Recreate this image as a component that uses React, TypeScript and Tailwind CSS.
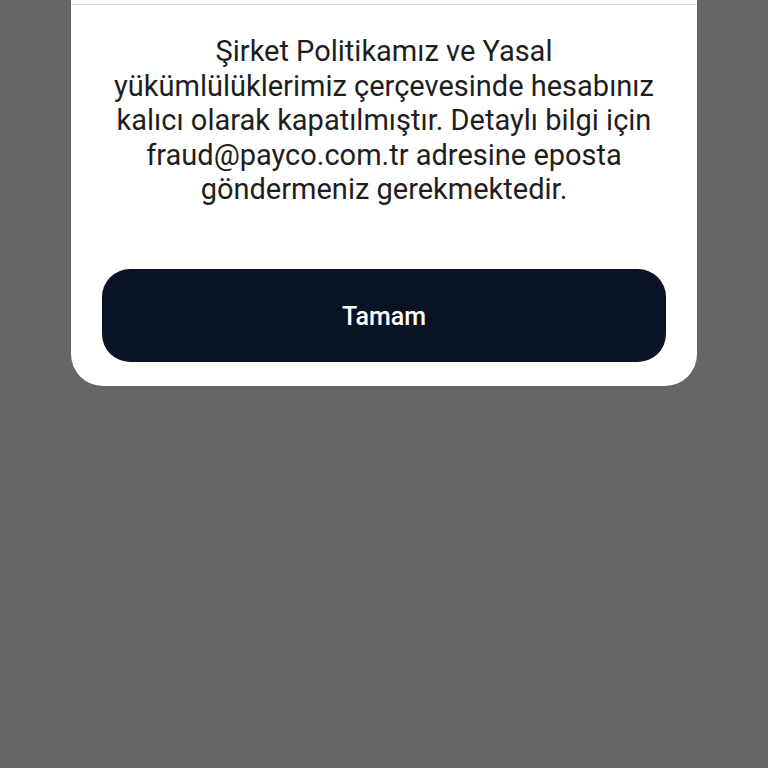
export default function App() {
  return (
    <div className="min-h-screen w-full bg-[#666666] font-['Roboto',sans-serif]">
      <div className="mx-[71px] w-[626px] rounded-b-[32px] bg-white">
        <div className="h-[4px]" />
        <div className="h-px bg-[#d9d9d9]" />
        <div className="px-[31px] pb-[24px]">
          <p className="pt-[29px] text-center text-[29px] leading-[34.5px] text-[#1e1e1e]">
            Şirket Politikamız ve Yasal
            <br />
            yükümlülüklerimiz çerçevesinde hesabınız
            <br />
            kalıcı olarak kapatılmıştır. Detaylı bilgi için
            <br />
            fraud@payco.com.tr adresine eposta
            <br />
            göndermeniz gerekmektedir.
          </p>
          <button className="mt-[62px] flex h-[93px] w-full items-center justify-center rounded-[28px] bg-[#0a1324] pt-[3px] text-[25px] font-medium text-white">
            Tamam
          </button>
        </div>
      </div>
    </div>
  );
}
